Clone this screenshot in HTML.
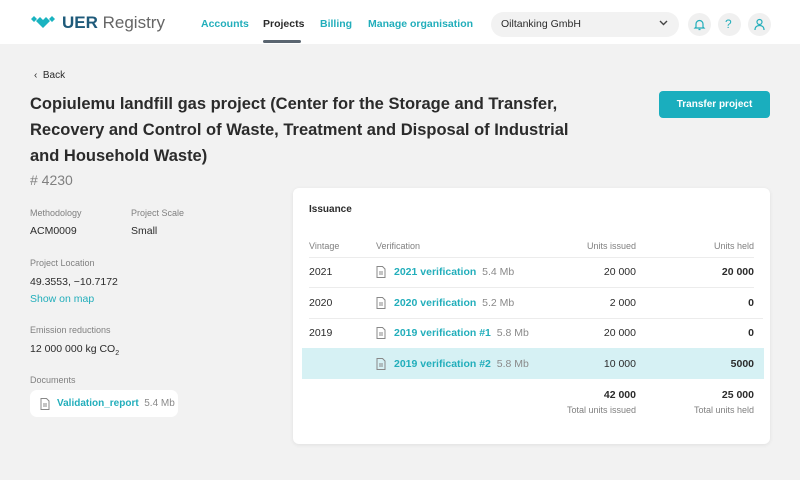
<!DOCTYPE html>
<html><head><meta charset="utf-8"><style>
*{margin:0;padding:0;box-sizing:border-box}
body{width:800px;height:480px;overflow:hidden;background:#f2f2f2;font-family:"Liberation Sans",sans-serif;color:#2b2b2b;position:relative}
.a{position:absolute;white-space:nowrap}
.hdr{position:absolute;left:0;top:0;width:800px;height:44px;background:#fff}
.nav{font-size:10.5px;font-weight:bold;color:#22aebb}
.lbl{font-size:9px;color:#808080}
.val{font-size:10.5px;color:#2b2b2b}
.t{color:#22aebb;font-weight:bold}
.g{color:#8a8a8a}
.card{position:absolute;left:293px;top:188px;width:477px;height:256px;background:#fff;border-radius:6px;box-shadow:0 1px 4px rgba(0,0,0,.08)}
.line{position:absolute;height:1px;background:#ececec}
</style></head><body>
<div class="hdr"></div>
<svg class="a" style="left:30px;top:15px" width="26" height="16" viewBox="0 0 26 16"><path d="M1 4l3-3 3 3-3 3z M6 6l4-4 3 3 3-3 4 4-7 7z M19 4l3-3 3 3-3 3z" fill="#1ab3c0"/></svg>
<div class="a" style="left:62px;top:13px;font-size:17px;font-weight:bold;color:#1e5a7a">UER <span style="font-weight:normal;color:#666">Registry</span></div>
<div class="a nav" style="left:201px;top:18px">Accounts</div>
<div class="a nav" style="left:263px;top:18px;color:#2b2b2b">Projects</div>
<div class="a" style="left:263px;top:40px;width:38px;height:3px;background:#5a6570;border-radius:2px"></div>
<div class="a nav" style="left:320px;top:18px">Billing</div>
<div class="a nav" style="left:368px;top:18px">Manage organisation</div>
<div class="a" style="left:491px;top:12px;width:188px;height:25px;background:#f2f2f2;border-radius:13px"></div>
<div class="a" style="left:501px;top:18px;font-size:10.5px;color:#2b2b2b">Oiltanking GmbH</div>
<svg class="a" style="left:659px;top:20px" width="9" height="6"><path d="M1 1l3.5 3.5L8 1" stroke="#444" stroke-width="1.4" fill="none"/></svg>
<div class="a" style="left:688px;top:13px;width:23px;height:23px;border-radius:50%;background:#f0f0f0"></div>
<div class="a" style="left:718px;top:13px;width:23px;height:23px;border-radius:50%;background:#f0f0f0"></div>
<div class="a" style="left:748px;top:13px;width:23px;height:23px;border-radius:50%;background:#f0f0f0"></div>
<svg class="a" style="left:693px;top:18px" width="13" height="13" viewBox="0 0 13 13"><path d="M3 9V6a3.5 3.5 0 0 1 7 0v3l1 1H2z M5.5 11.5h2" stroke="#22aebb" stroke-width="1.2" fill="none"/></svg>
<div class="a" style="left:725px;top:17px;font-size:12px;color:#22aebb">?</div>
<svg class="a" style="left:753px;top:18px" width="13" height="13" viewBox="0 0 13 13"><circle cx="6.5" cy="4" r="2.5" stroke="#22aebb" stroke-width="1.2" fill="none"/><path d="M2 12c0-3 2-4.5 4.5-4.5S11 9 11 12" stroke="#22aebb" stroke-width="1.2" fill="none"/></svg>

<div class="a" style="left:34px;top:70px;font-size:10px;color:#2b2b2b">‹&nbsp;&nbsp;Back</div>
<div class="a" style="left:30px;top:91px;font-size:16.5px;font-weight:bold;line-height:26px;color:#2b2b2b">Copiulemu landfill gas project (Center for the Storage and Transfer,<br>Recovery and Control of Waste, Treatment and Disposal of Industrial<br>and Household Waste)</div>
<div class="a" style="left:30px;top:172px;font-size:14px;color:#808080"># 4230</div>
<div class="a" style="left:659px;top:91px;width:111px;height:27px;background:#1aaebe;border-radius:4px;color:#fff;font-size:10px;font-weight:bold;text-align:center;line-height:27px">Transfer project</div>

<div class="a lbl" style="left:30px;top:208px">Methodology</div>
<div class="a val" style="left:30px;top:225px">ACM0009</div>
<div class="a lbl" style="left:131px;top:208px">Project Scale</div>
<div class="a val" style="left:131px;top:225px">Small</div>
<div class="a lbl" style="left:30px;top:258px">Project Location</div>
<div class="a val" style="left:30px;top:276px">49.3553, −10.7172</div>
<div class="a" style="left:30px;top:293px;font-size:10.5px;color:#22aebb">Show on map</div>
<div class="a lbl" style="left:30px;top:325px">Emission reductions</div>
<div class="a val" style="left:30px;top:343px">12 000 000 kg CO<sub style="font-size:7px">2</sub></div>
<div class="a lbl" style="left:30px;top:375px">Documents</div>
<div class="a" style="left:30px;top:390px;width:148px;height:27px;background:#fff;border-radius:7px"></div>
<svg class="a" style="left:40px;top:398px" width="10" height="12" viewBox="0 0 10 12"><path d="M1 .5h5.5L9 3v8.5H1z M3 6h4 M3 8h4" stroke="#888" fill="none"/></svg>
<div class="a" style="left:57px;top:398px;font-size:10px"><span class="t">Validation_report</span>&nbsp; <span class="g">5.4 Mb</span></div>

<div class="card">
<div class="a" style="left:16px;top:16px;font-size:10px;font-weight:bold;color:#2b2b2b">Issuance</div>
<div class="a lbl" style="left:16px;top:53px">Vintage</div>
<div class="a lbl" style="left:83px;top:53px">Verification</div>
<div class="a lbl" style="left:280px;top:53px;width:63px;text-align:right">Units issued</div>
<div class="a lbl" style="left:380px;top:53px;width:81px;text-align:right">Units held</div>
<div class="line" style="left:16px;top:69px;width:445px"></div>
<div class="line" style="left:16px;top:99px;width:445px"></div>
<div class="line" style="left:16px;top:130px;width:454px"></div>
<div class="a" style="left:9px;top:160px;width:462px;height:31px;background:#d6f1f4"></div>

<div class="a val" style="left:16px;top:78px">2021</div>
<div class="a val" style="left:16px;top:109px">2020</div>
<div class="a val" style="left:16px;top:139px">2019</div>

<svg class="a" style="left:83px;top:78px" width="10" height="12" viewBox="0 0 10 12"><path d="M1 .5h5.5L9 3v8.5H1z M3 6h4 M3 8h4" stroke="#888" fill="none"/></svg>
<svg class="a" style="left:83px;top:109px" width="10" height="12" viewBox="0 0 10 12"><path d="M1 .5h5.5L9 3v8.5H1z M3 6h4 M3 8h4" stroke="#888" fill="none"/></svg>
<svg class="a" style="left:83px;top:139px" width="10" height="12" viewBox="0 0 10 12"><path d="M1 .5h5.5L9 3v8.5H1z M3 6h4 M3 8h4" stroke="#888" fill="none"/></svg>
<svg class="a" style="left:83px;top:170px" width="10" height="12" viewBox="0 0 10 12"><path d="M1 .5h5.5L9 3v8.5H1z M3 6h4 M3 8h4" stroke="#888" fill="none"/></svg>

<div class="a" style="left:101px;top:78px;font-size:10.5px"><span class="t">2021 verification</span>&nbsp; <span class="g">5.4 Mb</span></div>
<div class="a" style="left:101px;top:109px;font-size:10.5px"><span class="t">2020 verification</span>&nbsp; <span class="g">5.2 Mb</span></div>
<div class="a" style="left:101px;top:139px;font-size:10.5px"><span class="t">2019 verification #1</span>&nbsp; <span class="g">5.8 Mb</span></div>
<div class="a" style="left:101px;top:170px;font-size:10.5px"><span class="t">2019 verification #2</span>&nbsp; <span class="g">5.8 Mb</span></div>

<div class="a val" style="left:280px;top:78px;width:63px;text-align:right">20 000</div>
<div class="a val" style="left:280px;top:109px;width:63px;text-align:right">2 000</div>
<div class="a val" style="left:280px;top:139px;width:63px;text-align:right">20 000</div>
<div class="a val" style="left:280px;top:170px;width:63px;text-align:right">10 000</div>
<div class="a val" style="left:380px;top:78px;width:81px;text-align:right;font-weight:bold">20 000</div>
<div class="a val" style="left:380px;top:109px;width:81px;text-align:right;font-weight:bold">0</div>
<div class="a val" style="left:380px;top:139px;width:81px;text-align:right;font-weight:bold">0</div>
<div class="a val" style="left:380px;top:170px;width:81px;text-align:right;font-weight:bold">5000</div>

<div class="a val" style="left:250px;top:201px;width:93px;text-align:right;font-weight:bold">42 000</div>
<div class="a lbl" style="left:250px;top:217px;width:93px;text-align:right">Total units issued</div>
<div class="a val" style="left:370px;top:201px;width:91px;text-align:right;font-weight:bold">25 000</div>
<div class="a lbl" style="left:370px;top:217px;width:91px;text-align:right">Total units held</div>
</div>
</body></html>
